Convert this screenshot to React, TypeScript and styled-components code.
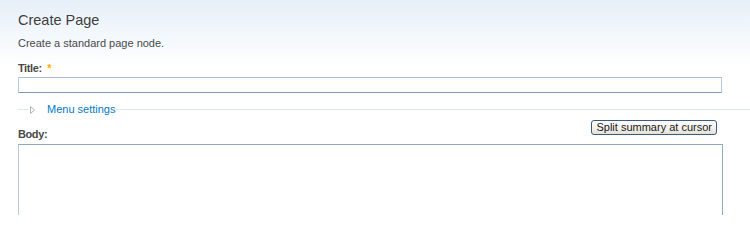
import React from "react";
import styled, { createGlobalStyle } from "styled-components";

const Global = createGlobalStyle`
  html {
    margin: 0;
    padding: 0;
    height: 215px;
    overflow: hidden;
    background: #ffffff;
  }
  body {
    margin: 0;
    padding: 0;
    width: 750px;
    height: 215px;
    overflow: hidden;
    background: #ffffff linear-gradient(to bottom, #e6eff8 0px, #f3f8fc 35px, #ffffff 68px) no-repeat;
    background-size: 100% 215px;
    font-family: "Liberation Sans", Arial, sans-serif;
    font-size: 11px;
    color: #494949;
  }
`;

const Page = styled.div`
  padding: 13px 28px 0 18px;
`;

const Heading = styled.h2`
  margin: 0;
  font-family: "Liberation Sans", Arial, sans-serif;
  font-size: 14.5px;
  line-height: 15px;
  font-weight: normal;
  color: #3f3f3f;
`;

const Description = styled.p`
  margin: 9px 0 0;
  line-height: 13px;
  color: #494949;
`;

const Label = styled.label<{ $top?: number }>`
  display: block;
  margin: ${(p) => p.$top ?? 12}px 0 0;
  line-height: 13px;
  font-weight: bold;
  letter-spacing: -0.4px;
  color: #494949;
`;

const Required = styled.span`
  margin-left: 3px;
  color: #ffae00;
  font-weight: bold;
  letter-spacing: 0;
`;

const TextInput = styled.input`
  display: block;
  box-sizing: border-box;
  width: 100%;
  height: 16px;
  margin: 2px 0 0;
  padding: 0 3px;
  border: 1px solid;
  border-color: #a9c0d6 #b6cbe0 #7f9db9 #b6cbe0;
  background: #fff;
  font: 11px "Liberation Sans", Arial, sans-serif;
  outline: none;
`;

const FieldsetHeader = styled.div`
  display: flex;
  align-items: center;
  height: 13px;
  margin: 10px -28px 0 0;
`;

const Rule = styled.span<{ $grow?: boolean }>`
  display: block;
  height: 1px;
  background: #dce6ee;
  width: ${(p) => (p.$grow ? "auto" : "10px")};
  flex: ${(p) => (p.$grow ? "1" : "none")};
`;

const Toggle = styled.svg`
  display: block;
  margin-left: 2px;
  flex: none;
`;

const LegendLink = styled.a`
  margin: 0 1px 0 12px;
  line-height: 13px;
  color: #027ac6;
  text-decoration: none;
  white-space: nowrap;
`;

const BodyHeader = styled.div`
  display: flex;
  justify-content: space-between;
  align-items: flex-end;
  margin-top: 4px;
`;

const SplitButton = styled.button`
  box-sizing: border-box;
  height: 15px;
  margin: 0 5px 6px 0;
  padding: 0 4px;
  border: 1px solid #3a5a82;
  border-radius: 3px;
  background: linear-gradient(to bottom, #ffffff 0%, #f3f2ed 55%, #e2e0d6 100%);
  color: #1a1a1a;
  font: 11px/13px "Liberation Sans", Arial, sans-serif;
  white-space: nowrap;
`;

const BodyArea = styled.textarea`
  display: block;
  box-sizing: border-box;
  width: calc(100% + 1px);
  height: 71px;
  margin: 3px 0 0;
  border: 1px solid;
  border-bottom: 0;
  border-color: #8ea9c3 #8ea9c3 #7f9db9 #b6cbe0;
  background: #fff;
  resize: none;
  outline: none;
`;

export default function App() {
  return (
    <>
      <Global />
      <Page>
        <Heading>Create Page</Heading>
        <Description>Create a standard page node.</Description>
        <Label htmlFor="title">
          Title: <Required>*</Required>
        </Label>
        <TextInput id="title" type="text" />
        <FieldsetHeader>
          <Rule />
          <Toggle width="5" height="8" viewBox="0 0 5 8">
            <path d="M0.5 0.5 L4.5 4 L0.5 7.5 Z" fill="#fff" stroke="#b3b3b3" strokeWidth="1" />
          </Toggle>
          <LegendLink href="#">Menu settings</LegendLink>
          <Rule $grow />
        </FieldsetHeader>
        <BodyHeader>
          <Label htmlFor="body" $top={0}>Body:</Label>
          <SplitButton type="button">Split summary at cursor</SplitButton>
        </BodyHeader>
        <BodyArea id="body" />
      </Page>
    </>
  );
}
